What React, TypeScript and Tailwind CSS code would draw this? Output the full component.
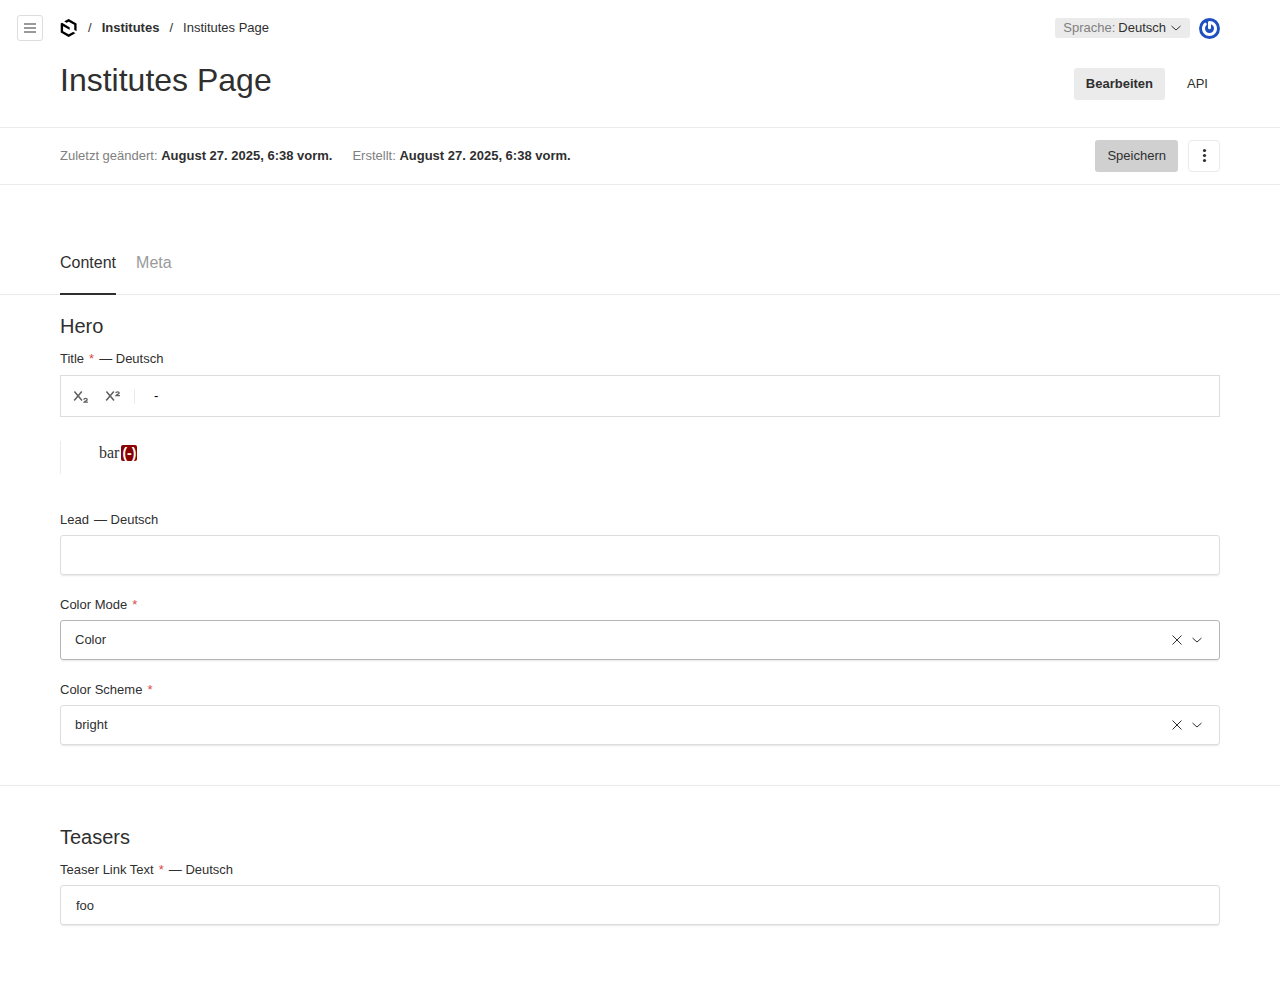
import React, { useState } from 'react';

const Logo = () => (
  <svg viewBox="0 0 25 25" className="size-[18px]" fill="#000" aria-hidden="true">
    <path d="M11.8673 21.2336L4.40922 16.9845C4.31871 16.9309 4.25837 16.8355 4.25837 16.7282V10.1609C4.25837 10.0477 4.38508 9.97616 4.48162 10.0298L13.1404 14.9642C13.2611 15.0358 13.412 14.9464 13.412 14.8093V11.6091C13.412 11.4839 13.3456 11.3647 13.2309 11.2992L2.81624 5.36353C2.72573 5.30989 2.60505 5.30989 2.51454 5.36353L1.15085 6.14422C1.06034 6.19786 1 6.29321 1 6.40048V18.5995C1 18.7068 1.06034 18.8021 1.15085 18.8558L11.8491 24.9583C11.9397 25.0119 12.0603 25.0119 12.1509 24.9583L21.1355 19.8331C21.2562 19.7616 21.2562 19.5948 21.1355 19.5232L18.3357 17.9261C18.2211 17.8605 18.0883 17.8605 17.9737 17.9261L12.175 21.2336C12.0845 21.2872 11.9638 21.2872 11.8733 21.2336H11.8673Z" />
    <path d="M22.8491 6.13827L12.1508 0.0417218C12.0603 -0.0119135 11.9397 -0.0119135 11.8491 0.0417218L6.19528 3.2658C6.0746 3.33731 6.0746 3.50418 6.19528 3.57569L8.97092 5.16091C9.08557 5.22647 9.21832 5.22647 9.33296 5.16091L11.8672 3.71872C11.9578 3.66508 12.0784 3.66508 12.1689 3.71872L19.627 7.96782C19.7175 8.02146 19.7778 8.11681 19.7778 8.22408V14.8212C19.7778 14.9464 19.8442 15.0656 19.9589 15.1311L22.7345 16.7104C22.8552 16.7819 23.006 16.6925 23.006 16.5554V6.40048C23.006 6.29321 22.9457 6.19786 22.8551 6.14423L22.8491 6.13827Z" />
  </svg>
);

const Chevron = () => (
  <svg viewBox="0 0 20 20" className="pointer-events-none size-5 shrink-0" fill="none" stroke="#2f2f2f" aria-hidden="true">
    <path d="M5.5 8L10 12L14.5 8" />
  </svg>
);

const Cross = () => (
  <svg viewBox="0 0 20 20" className="size-5" fill="none" stroke="#2f2f2f" aria-hidden="true">
    <path d="M5.5 5.5L14.5 14.5M14.5 5.5L5.5 14.5" />
  </svg>
);

const Avatar = () => (
  <svg viewBox="0 0 21 21" className="block size-[21px]" aria-hidden="true">
    <circle cx="10.5" cy="10.5" r="10.5" fill="#1f50c0" />
    <g transform="translate(3 3) scale(0.625)">
      <path
        fill="#fff"
        d="M12 0c-1.326 0-2.4 1.074-2.4 2.4v8.4c0 1.324 1.074 2.398 2.4 2.398s2.4-1.074 2.4-2.398V5.21c2.795.99 4.799 3.654 4.799 6.789 0 3.975-3.225 7.199-7.199 7.199S4.801 15.975 4.801 12c0-1.989.805-3.789 2.108-5.091.938-.938.938-2.458 0-3.396s-2.457-.938-3.396 0C1.344 5.686 0 8.686 0 12c0 6.627 5.373 12 12 12s12-5.373 12-12S18.627 0 12 0"
      />
    </g>
  </svg>
);

const ScriptIcon = ({ raised }: { raised?: boolean }) => (
  <svg viewBox="0 0 20 20" className="size-5" fill="none" stroke="#606060" aria-hidden="true">
    <path d="M3.4 5.4L11 14.6M10.8 5.4L3.2 14.6" strokeWidth="1.5" />
    <path
      d={
        raised
          ? 'M12.9 7.1C12.9 5.4 16.2 5.4 16.2 7.1C16.2 8.1 13.5 8.6 13 9.6H16.9'
          : 'M12.9 13.7C12.9 12 16.2 12 16.2 13.7C16.2 14.7 13.5 15.2 13 16.2H16.9'
      }
      strokeWidth="1.3"
    />
  </svg>
);

type LabelProps = { id: string; text: string; required?: boolean; locale?: boolean };

const FieldLabel = ({ id, text, required, locale }: LabelProps) => (
  <label htmlFor={id} id={`${id}-label`} className="mb-[5px] flex gap-[5px] leading-5">
    <span>{text}</span>
    {required && <span className="text-[#da4b48]">*</span>}
    {locale && <span>— Deutsch</span>}
  </label>
);

const TextField = ({ value, ...label }: LabelProps & { value: string }) => (
  <div>
    <FieldLabel {...label} />
    <input
      id={label.id}
      type="text"
      defaultValue={value}
      className="block h-10 w-full rounded-[3px] border border-[#dddddd] bg-white px-[15px] shadow-[0_2px_2px_-1px_rgba(0,0,0,0.1)] outline-none"
    />
  </div>
);

type SelectProps = LabelProps & { options: string[]; active?: boolean };

const SelectField = ({ options, active, ...label }: SelectProps) => {
  const [value, setValue] = useState(options[0]);
  return (
    <div>
      <FieldLabel {...label} />
      <div
        className={`flex h-10 items-center rounded-[3px] border bg-white pr-3 shadow-[0_2px_2px_-1px_rgba(0,0,0,0.1)] ${
          active ? 'border-[#b5b5b5]' : 'border-[#dddddd]'
        }`}
      >
        <select
          id={label.id}
          value={value}
          onChange={(e) => setValue(e.target.value)}
          className="h-full min-w-0 flex-1 appearance-none bg-transparent pl-[14px] outline-none"
        >
          <option value="" />
          {options.map((o) => (
            <option key={o}>{o}</option>
          ))}
        </select>
        <button type="button" aria-label="Löschen" onClick={() => setValue('')}>
          <Cross />
        </button>
        <Chevron />
      </div>
    </div>
  );
};

export default function App() {
  return (
    <div className="min-h-screen bg-white font-['Liberation_Sans',Arial,sans-serif] text-[13px] leading-5 text-[#2f2f2f]">
      <header className="flex h-14 items-center pr-[60px] pl-[17px]">
        <button type="button" aria-label="Menü" className="flex size-[26px] items-center justify-center rounded-[3px] border border-[#dddddd]">
          <svg viewBox="0 0 12 10" className="h-[10px] w-3" stroke="#9a9a9a" strokeWidth="2" aria-hidden="true">
            <path d="M0 1H12M0 5H12M0 9H12" />
          </svg>
        </button>
        <nav aria-label="Breadcrumb" className="ml-[17px] flex flex-1 items-center gap-[10px]">
          <a href="#home" aria-label="Dashboard">
            <Logo />
          </a>
          <span>/</span>
          <a href="#institutes" className="font-bold">Institutes</a>
          <span>/</span>
          <span>Institutes Page</span>
        </nav>
        <button type="button" className="flex h-5 items-center rounded-[3px] bg-[#ebebeb] pr-1 pl-2">
          <span className="mr-[3px] text-[#808080]">Sprache:</span>
          <span>Deutsch</span>
          <Chevron />
        </button>
        <a href="#account" aria-label="Konto" className="ml-[9px]">
          <Avatar />
        </a>
      </header>

      <div className="flex items-start justify-between border-b border-[#ebebeb] px-[60px] pb-[27px]">
        <h1 className="pt-1 text-[32px] leading-10">Institutes Page</h1>
        <nav aria-label="Ansicht" className="flex gap-[10px] pt-3">
          <a href="#edit" className="rounded-[3px] bg-[#ebebeb] px-3 py-[6px] font-bold">Bearbeiten</a>
          <a href="#api" className="px-3 py-[6px]">API</a>
        </nav>
      </div>

      <div className="flex items-center justify-between border-b border-[#ebebeb] px-[60px] py-3">
        <div className="flex gap-5">
          <p><span className="text-[#808080]">Zuletzt geändert:</span> <b>August 27. 2025, 6:38 vorm.</b></p>
          <p><span className="text-[#808080]">Erstellt:</span> <b>August 27. 2025, 6:38 vorm.</b></p>
        </div>
        <div className="flex gap-[10px]">
          <button type="button" className="h-8 rounded-[3px] bg-[#d0d0d0] px-3">Speichern</button>
          <button type="button" aria-label="Weitere Aktionen" className="flex size-8 items-center justify-center rounded-[4px] border border-[#ebebeb]">
            <svg viewBox="0 0 20 20" className="size-5" fill="#2f2f2f" aria-hidden="true">
              <circle cx="10.5" cy="4.5" r="1.6" />
              <circle cx="10.5" cy="9.5" r="1.6" />
              <circle cx="10.5" cy="14.5" r="1.6" />
            </svg>
          </button>
        </div>
      </div>

      <main>
        <div role="tablist" className="mt-[60px] flex gap-5 border-b border-[#ebebeb] px-[60px] text-base leading-6">
          <button type="button" role="tab" aria-selected="true" className="-mb-px border-b-2 border-[#2f2f2f] pt-[6px] pb-[18px]">Content</button>
          <button type="button" role="tab" aria-selected="false" className="-mb-px border-b-2 border-transparent pt-[6px] pb-[18px] text-[#9a9a9a]">Meta</button>
        </div>

        <section className="flex flex-col gap-5 border-b border-[#ebebeb] px-[60px] pt-[19px] pb-10">
          <div>
            <h2 className="mb-[11px] text-xl leading-6">Hero</h2>
            <FieldLabel id="title" text="Title" required locale />
            <div className="pt-px">
              <div role="toolbar" aria-label="Formatierung" className="mb-6 flex h-[42px] items-center border border-[#dddddd] pl-[10px]">
                <button type="button" aria-label="Tiefgestellt"><ScriptIcon /></button>
                <button type="button" aria-label="Hochgestellt" className="ml-3"><ScriptIcon raised /></button>
                <span className="ml-[11px] h-[15px] w-px bg-[#ebebeb]" />
                <button type="button" aria-label="Weiches Trennzeichen" className="ml-[19px] text-black">-</button>
              </div>
              <div
                id="title"
                role="textbox"
                aria-labelledby="title-label"
                contentEditable
                suppressContentEditableWarning
                className="mb-4 h-[33px] border-l border-[#ebebeb] pl-[38px] font-['Liberation_Serif',serif] text-base leading-6 outline-none"
              >
                bar
                <span className="ml-[2px] rounded-[2px] bg-[#8b0000] px-px font-['Liberation_Sans',sans-serif] text-sm font-bold text-white">(-)</span>
              </div>
            </div>
          </div>
          <TextField id="lead" text="Lead" locale value="" />
          <SelectField id="color-mode" text="Color Mode" required options={['Color']} active />
          <SelectField id="color-scheme" text="Color Scheme" required options={['bright']} />
        </section>

        <section className="px-[60px] pt-[39px] pb-[60px]">
          <h2 className="mb-[11px] text-xl leading-6">Teasers</h2>
          <TextField id="teaser-link" text="Teaser Link Text" required locale value="foo" />
        </section>
      </main>
    </div>
  );
}
